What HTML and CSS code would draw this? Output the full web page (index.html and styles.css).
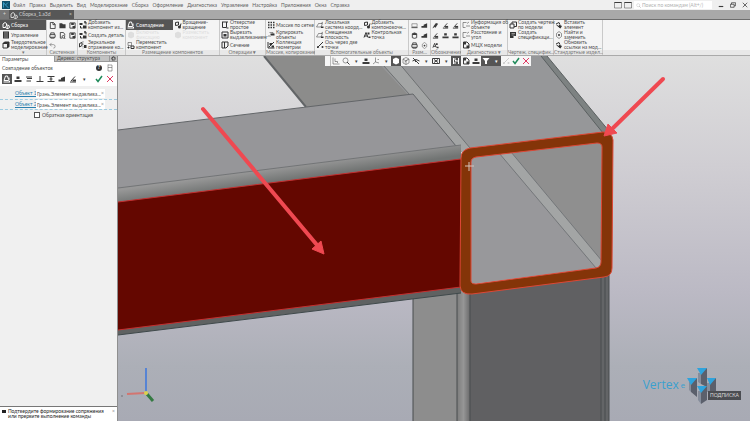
FILE: index.html
```html
<!DOCTYPE html>
<html lang="ru">
<head>
<meta charset="utf-8">
<meta name="viewport" content="width=device-width, initial-scale=1.0">
<title>Сборка_1.a3d</title>
<link rel="stylesheet" href="styles.css">
</head>
<body>
  <svg class="sprite" aria-hidden="true">
    <symbol id="asm" viewBox="0 0 16 16"><path d="M2 13V6l4-3 3 2v3M2 13h5M9 15l-2-3 3-4 4 1 1 4-3 2z" fill="none" stroke="currentColor" stroke-width="2"/><circle cx="11" cy="12" r="1.5" fill="currentColor"/></symbol>
    <symbol id="manage" viewBox="0 0 16 16"><path d="M2 1h12v14H2z" fill="currentColor"/><path d="M4 4h8M4 8h8M4 12h8" stroke="#f2f2f2" stroke-width="1"/></symbol>
    <symbol id="solid" viewBox="0 0 16 16"><path d="M2 5l3-3h9v9l-3 3" fill="currentColor" stroke="currentColor" stroke-width="2"/><path d="M2 5h9v9H2z" fill="#f2f2f2" stroke="currentColor" stroke-width="2"/></symbol>
    <symbol id="new" viewBox="0 0 16 16"><path d="M3 1h7l4 4v10H3zM9 1v5h5" fill="none" stroke="currentColor" stroke-width="2"/></symbol>
    <symbol id="open" viewBox="0 0 16 16"><path d="M1 3h6l2 2h6v9H1z" fill="currentColor"/></symbol>
    <symbol id="save" viewBox="0 0 16 16"><path d="M2 2h12v12H2z" fill="none" stroke="currentColor" stroke-width="2"/><path d="M5 2h6v5H5zM8 9h6v5H8z" fill="currentColor"/></symbol>
    <symbol id="print" viewBox="0 0 16 16"><path d="M4 6V2h8v4M2 6h12v6H2zM4 12v2h8v-2" fill="none" stroke="currentColor" stroke-width="2"/></symbol>
    <symbol id="preview" viewBox="0 0 16 16"><path d="M3 14V1h7l3 4v3M3 14h4M12 14l3 2" fill="none" stroke="currentColor" stroke-width="2"/><circle cx="10" cy="11" r="3" fill="none" stroke="currentColor" stroke-width="2"/></symbol>
    <symbol id="undo" viewBox="0 0 16 16"><path d="M6 2L2 6l4 4M2 6h8q4 0 4 4t-4 4" fill="none" stroke="currentColor" stroke-width="1"/></symbol>
    <symbol id="addpart" viewBox="0 0 16 16"><path d="M1 4h6v4H1zM8 9h7v6H8z" fill="currentColor"/><path d="M3 10v4h4M10 2h4v5M12 0v5" fill="none" stroke="currentColor" stroke-width="2"/></symbol>
    <symbol id="mirror" viewBox="0 0 16 16"><path d="M8 0v16" stroke="currentColor" stroke-width="1" stroke-dasharray="3 2"/><path d="M1 5l5-2v6l-5 3z" fill="none" stroke="currentColor" stroke-width="2"/><path d="M10 8h5v6h-5z" fill="currentColor"/></symbol>
    <symbol id="mate" viewBox="0 0 16 16"><path d="M2 11l3-9h4l2 7M2 11h9l3 3H1M12 5v6" fill="none" stroke="currentColor" stroke-width="2"/></symbol>
    <symbol id="rotate" viewBox="0 0 16 16"><path d="M3 3l6-1v6l-6 1zM8 12q6 0 6-7" fill="none" stroke="currentColor" stroke-width="2"/><circle cx="11" cy="12" r="3" fill="currentColor"/></symbol>
    <symbol id="move" viewBox="0 0 16 16"><path d="M2 3h7v6H2z" fill="none" stroke="currentColor" stroke-width="1"/><path d="M3 11v4M1 13h4M8 10h6v5H8z" fill="none" stroke="currentColor" stroke-width="2"/></symbol>
    <symbol id="hole" viewBox="0 0 16 16"><path d="M2 2h12M3 2v11h8V2M11 14h4" fill="none" stroke="currentColor" stroke-width="2"/></symbol>
    <symbol id="cut" viewBox="0 0 16 16"><path d="M2 2h12v12H2z" fill="none" stroke="currentColor" stroke-width="2"/><path d="M5 6h6v5H5z" fill="currentColor"/></symbol>
    <symbol id="section" viewBox="0 0 16 16"><path d="M2 2h5v12H2zM7 2h7v8l-4 4H7" fill="none" stroke="currentColor" stroke-width="2"/></symbol>
    <symbol id="grid" viewBox="0 0 16 16"><path d="M2 3h3M7 3h3M12 3h3M2 8h3M7 8h3M12 8h3M2 13h3M7 13h3M12 13h3" stroke="currentColor" stroke-width="3"/></symbol>
    <symbol id="copy" viewBox="0 0 16 16"><path d="M1 12l3-3 3 3M5 3h7v4" fill="none" stroke="currentColor" stroke-width="1"/><path d="M7 5h8v4H7z" fill="currentColor"/></symbol>
    <symbol id="coll" viewBox="0 0 16 16"><path d="M2 2v12h13M4 12L14 2" fill="none" stroke="currentColor" stroke-width="2"/><path d="M5 4h5v4H5zM9 9h5v4H9z" fill="currentColor"/></symbol>
    <symbol id="plane" viewBox="0 0 16 16"><path d="M1 12l4-7h8l-3 7zM10 5l4-3" fill="none" stroke="currentColor" stroke-width="1"/><path d="M10 11h5v3h-5z" fill="currentColor"/></symbol>
    <symbol id="axis" viewBox="0 0 16 16"><path d="M2 14L14 2" stroke="currentColor" stroke-width="2"/><circle cx="4" cy="12" r="2" fill="currentColor"/><circle cx="13" cy="12" r="2" fill="currentColor"/></symbol>
    <symbol id="point" viewBox="0 0 16 16"><path d="M2 13L6 3l4 10M3 10h6" fill="none" stroke="currentColor" stroke-width="2"/><path d="M9 3h4v4H9zM11 11h4v3h-4z" fill="currentColor"/></symbol>
    <symbol id="box" viewBox="0 0 16 16"><path d="M2 4h12v7H2z" fill="none" stroke="currentColor" stroke-width="1"/><path d="M1 12h14v2H1z" fill="currentColor"/></symbol>
    <symbol id="block" viewBox="0 0 16 16"><path d="M1 9h5V6l8-3v10H1z" fill="currentColor"/></symbol>
    <symbol id="cyl" viewBox="0 0 16 16"><path d="M3 4q5-4 10 0v9q-5 3-10 0z" fill="none" stroke="currentColor" stroke-width="2"/><path d="M3 4q5-4 10 0v3H3z" fill="currentColor"/></symbol>
    <symbol id="brush" viewBox="0 0 16 16"><path d="M3 10l6-8 5 2-6 9z" fill="currentColor"/><path d="M2 14l3-4" stroke="currentColor" stroke-width="2"/></symbol>
    <symbol id="mark" viewBox="0 0 16 16"><path d="M2 14h12M4 12l8-9" fill="none" stroke="currentColor" stroke-width="2"/><path d="M7 9h7v4H7z" fill="currentColor"/></symbol>
    <symbol id="info" viewBox="0 0 16 16"><path d="M2 3h7M2 3v10h5M10 5l4-3" fill="none" stroke="currentColor" stroke-width="1"/><path d="M9 9h2v2H9zM13 9h2v2h-2z" fill="currentColor"/></symbol>
    <symbol id="mass" viewBox="0 0 16 16"><path d="M3 2h7l4 4v8H3z" fill="none" stroke="currentColor" stroke-width="2"/><path d="M3 2h5v5H3zM9 9h5v5H9z" fill="currentColor"/></symbol>
    <symbol id="sheet" viewBox="0 0 16 16"><path d="M2 6h8v8H2zM6 6V2h9v9h-5" fill="none" stroke="currentColor" stroke-width="2"/></symbol>
    <symbol id="bom" viewBox="0 0 16 16"><path d="M2 2h12v8H9v4H2z" fill="currentColor"/><path d="M5 5h7M5 8h6" stroke="#f2f2f2" stroke-width="1"/></symbol>
    <symbol id="find" viewBox="0 0 16 16"><path d="M8 1l5 4v6l-5 4-5-4V5z" fill="none" stroke="currentColor" stroke-width="1"/><circle cx="8" cy="8" r="2" fill="currentColor"/></symbol>
    <symbol id="insert" viewBox="0 0 16 16"><path d="M2 6l6-3 2 4M3 8l7 5" fill="none" stroke="currentColor" stroke-width="2"/><path d="M8 7l6 3-3 5-4-3z" fill="currentColor"/></symbol>
    <symbol id="lens" viewBox="0 0 16 16"><circle cx="7" cy="7" r="5" fill="none" stroke="currentColor" stroke-width="1"/><path d="M10 10l5 5" stroke="currentColor" stroke-width="2"/></symbol>
    <symbol id="stack" viewBox="0 0 16 16"><path d="M1 10h14v4H1zM5 3h6v5H5z" fill="currentColor"/></symbol>
    <symbol id="axes" viewBox="0 0 16 16"><path d="M7 1v9l-5 4M7 10l7 2M11 5h3" fill="none" stroke="currentColor" stroke-width="1"/></symbol>
    <symbol id="cube" viewBox="0 0 16 16"><path d="M8 1l6 3v8l-6 3-6-3V4z" fill="currentColor"/></symbol>
    <symbol id="wire" viewBox="0 0 16 16"><path d="M8 1l6 3v8l-6 3-6-3V4zM2 4l6 4 6-4M8 8v7M5 10l6-5" fill="none" stroke="currentColor" stroke-width="1"/></symbol>
    <symbol id="hide" viewBox="0 0 16 16"><path d="M1 8q7-6 14 0M2 2l12 12M6 9h4" fill="none" stroke="currentColor" stroke-width="2"/></symbol>
    <symbol id="cross" viewBox="0 0 16 16"><path d="M1 3h14v10H1zM4 5l8 6M12 5l-8 6" fill="none" stroke="currentColor" stroke-width="2"/></symbol>
    <symbol id="snap" viewBox="0 0 16 16"><path d="M3 2v12M3 4h5M3 12h5M13 2v12M9 8h4" fill="none" stroke="currentColor" stroke-width="2"/><path d="M6 6h3v3H6z" fill="currentColor"/></symbol>
    <symbol id="frame" viewBox="0 0 16 16"><path d="M2 1v13h13M6 3v6h5v3" fill="none" stroke="currentColor" stroke-width="1"/></symbol>
    <symbol id="filter" viewBox="0 0 16 16"><path d="M1 2h14l-5 6v6H6V8z" fill="currentColor"/></symbol>
    <symbol id="check" viewBox="0 0 16 16"><path d="M2 8l4 5 8-11" fill="none" stroke="currentColor" stroke-width="3"/></symbol>
    <symbol id="x" viewBox="0 0 16 16"><path d="M2 2l12 12M14 2L2 14" fill="none" stroke="currentColor" stroke-width="2"/></symbol>
    <symbol id="perp" viewBox="0 0 16 16"><path d="M1 13h14M8 2v11" fill="none" stroke="currentColor" stroke-width="2"/></symbol>
    <symbol id="dist" viewBox="0 0 16 16"><path d="M1 3h14M1 13h14M8 3v10M5 8h6" fill="none" stroke="currentColor" stroke-width="2"/></symbol>
    <symbol id="par" viewBox="0 0 16 16"><path d="M2 4h12M4 7h10M3 12h9" fill="none" stroke="currentColor" stroke-width="2"/></symbol>
    <symbol id="gear" viewBox="0 0 16 16"><circle cx="8" cy="8" r="5" fill="none" stroke="currentColor" stroke-width="4" stroke-dasharray="3 1"/></symbol>
    <symbol id="tree" viewBox="0 0 16 16"><path d="M4 1v13h8M4 7h8M4 2h8v12" fill="none" stroke="currentColor" stroke-width="1"/></symbol>
    <symbol id="win" viewBox="0 0 16 16"><path d="M1 3h14v11H1z" fill="none" stroke="currentColor" stroke-width="1"/><path d="M1 2h14v2H1z" fill="currentColor"/></symbol>
    <symbol id="restore" viewBox="0 0 16 16"><path d="M1 6h10v8H1zM4 6V2h11v8h-4" fill="none" stroke="currentColor" stroke-width="2"/></symbol>
    <symbol id="min" viewBox="0 0 16 16"><path d="M2 12h12" stroke="currentColor" stroke-width="3"/></symbol>
  </svg>

  <div class="app">
    <header class="menubar">
      <svg class="logo" viewBox="0 0 16 16"><path d="M0 0h16v16H0z" fill="#12506c"/><path d="M3 13V3l4 5 5-5M7 8l6 6" fill="none" stroke="#3a9bc4" stroke-width="2"/></svg>
      <nav class="menu">
        <a href="#">Файл</a><a href="#">Правка</a><a href="#">Выделить</a><a href="#">Вид</a><a href="#">Моделирование</a><a href="#">Сборка</a><a href="#">Оформление</a><a href="#">Диагностика</a><a href="#">Управление</a><a href="#">Настройка</a><a href="#">Приложения</a><a href="#">Окна</a><a href="#">Справка</a>
      </nav>
      <button class="ico" aria-label="Окно"><svg><use href="#win"/></svg></button>
      <button class="ico" aria-label="Панель"><svg><use href="#win"/></svg></button>
      <label class="search"><svg><use href="#lens"/></svg><input type="text" aria-label="Поиск" placeholder="Поиск по командам (Alt+/)"></label>
      <div class="winbtns">
        <button class="ico" aria-label="Свернуть"><svg><use href="#min"/></svg></button>
        <button class="ico" aria-label="Восстановить"><svg><use href="#restore"/></svg></button>
        <button class="ico" aria-label="Закрыть"><svg><use href="#x"/></svg></button>
      </div>
    </header>

    <div class="doctabs">
      <button class="home">+</button>
      <button class="doctab"><svg><use href="#asm"/></svg><span>Сборка_1.a3d</span><span>×</span></button>
    </div>

    <div class="ribbon">
      <section class="group modes">
        <div class="cols"><div class="col">
          <button class="cmd on"><svg><use href="#asm"/></svg><span>Сборка</span></button>
          <button class="cmd"><svg><use href="#manage"/></svg><span>Управление</span></button>
          <button class="cmd"><svg><use href="#solid"/></svg><span>Твердотельное<br>моделирование</span></button>
        </div></div>
        <footer>▾</footer>
      </section>
      <section class="group system">
        <div class="icons three">
          <svg><use href="#new"/></svg><svg><use href="#open"/></svg><svg><use href="#save"/></svg>
          <svg><use href="#print"/></svg><svg><use href="#preview"/></svg><svg><use href="#save"/></svg>
          <svg><use href="#undo"/></svg>
        </div>
        <footer>Системная</footer>
      </section>
      <section class="group parts">
        <div class="cols"><div class="col">
          <button class="cmd"><svg><use href="#addpart"/></svg><span>Добавить<br>компонент из...</span></button>
          <button class="cmd"><svg><use href="#addpart"/></svg><span>Создать деталь</span></button>
          <button class="cmd"><svg><use href="#mirror"/></svg><span>Зеркальное<br>отражение ко...</span></button>
        </div></div>
        <footer>Компоненты</footer>
      </section>
      <section class="group place">
        <div class="cols">
          <div class="col">
            <button class="cmd on"><svg><use href="#mate"/></svg><span>Совпадение</span></button>
            <button class="cmd off" disabled><svg><use href="#cube"/></svg><span>Включить<br>фиксацию</span></button>
            <button class="cmd"><svg><use href="#move"/></svg><span>Переместить<br>компонент</span></button>
          </div>
          <div class="col">
            <button class="cmd"><svg><use href="#rotate"/></svg><span>Вращение-<br>вращение</span></button>
            <button class="cmd off" disabled><svg><use href="#cube"/></svg><span>Разместить<br>компонент</span></button>
          </div>
        </div>
        <footer>Размещение компонентов</footer>
      </section>
      <section class="group ops">
        <div class="cols"><div class="col">
          <button class="cmd"><svg><use href="#hole"/></svg><span>Отверстие<br>простое</span></button>
          <button class="cmd"><svg><use href="#cut"/></svg><span>Вырезать<br>выдавливанием</span></button>
          <button class="cmd"><svg><use href="#section"/></svg><span>Сечение</span></button>
        </div></div>
        <footer>Операции <b>▾</b></footer>
      </section>
      <section class="group array">
        <div class="cols"><div class="col">
          <button class="cmd"><svg><use href="#grid"/></svg><span>Массив по сетке</span></button>
          <button class="cmd"><svg><use href="#copy"/></svg><span>Копировать<br>объекты</span></button>
          <button class="cmd"><svg><use href="#coll"/></svg><span>Коллекция<br>геометрии</span></button>
        </div></div>
        <footer>Массив, копирование</footer>
      </section>
      <section class="group aux">
        <div class="cols">
          <div class="col">
            <button class="cmd"><svg><use href="#plane"/></svg><span>Локальная<br>система коорд...</span></button>
            <button class="cmd"><svg><use href="#plane"/></svg><span>Смещенная<br>плоскость</span></button>
            <button class="cmd"><svg><use href="#axis"/></svg><span>Ось через две<br>точки</span></button>
          </div>
          <div class="col">
            <button class="cmd"><svg><use href="#rotate"/></svg><span>Добавить<br>компоновочн...</span></button>
            <button class="cmd"><svg><use href="#point"/></svg><span>Контрольная<br>точка</span></button>
          </div>
        </div>
        <footer>Вспомогательные объекты</footer>
      </section>
      <section class="group dims">
        <div class="icons two">
          <svg><use href="#box"/></svg><svg><use href="#block"/></svg>
          <svg><use href="#cyl"/></svg><svg><use href="#block"/></svg>
          <svg><use href="#print"/></svg><svg><use href="#find"/></svg>
        </div>
        <footer>Разм...</footer>
      </section>
      <section class="group marks">
        <div class="icons three">
          <svg><use href="#brush"/></svg><svg><use href="#mark"/></svg><svg><use href="#mark"/></svg>
          <svg><use href="#mark"/></svg><svg><use href="#stack"/></svg><svg><use href="#stack"/></svg>
          <svg><use href="#point"/></svg>
        </div>
        <footer>Обозначения</footer>
      </section>
      <section class="group diag">
        <div class="cols"><div class="col">
          <button class="cmd"><svg><use href="#info"/></svg><span>Информация об<br>объекте</span></button>
          <button class="cmd"><svg><use href="#info"/></svg><span>Расстояние и<br>угол</span></button>
          <button class="cmd"><svg><use href="#mass"/></svg><span>МЦХ модели</span></button>
        </div></div>
        <footer>Диагностика <b>▾</b></footer>
      </section>
      <section class="group draw">
        <div class="cols"><div class="col">
          <button class="cmd"><svg><use href="#sheet"/></svg><span>Создать чертеж<br>по модели</span></button>
          <button class="cmd"><svg><use href="#bom"/></svg><span>Создать<br>спецификаци...</span></button>
        </div></div>
        <footer>Чертеж, специфик...</footer>
      </section>
      <section class="group std">
        <div class="cols"><div class="col">
          <button class="cmd"><svg><use href="#insert"/></svg><span>Вставить<br>элемент</span></button>
          <button class="cmd"><svg><use href="#find"/></svg><span>Найти и<br>заменить</span></button>
          <button class="cmd"><svg><use href="#insert"/></svg><span>Обновить<br>ссылки на мод...</span></button>
        </div></div>
        <footer>Стандартные издел...</footer>
      </section>
      <div class="rest"></div>
    </div>

    <div class="work">
      <aside class="side">
        <div class="sidetabs">
          <button class="current">Параметры</button>
          <button>Дерево: структура</button>
          <button class="ico" aria-label="Настройка"><svg><use href="#gear"/></svg></button>
        </div>
        <div class="sidehead">
          <div class="title"><span>Совпадение объектов</span><b class="help">?</b><svg><use href="#tree"/></svg></div>
          <div class="tools">
            <button class="ico on" aria-label="Совпадение"><svg><use href="#mate"/></svg></button>
            <button class="ico" aria-label="Соосность"><svg><use href="#stack"/></svg></button>
            <button class="ico" aria-label="Параллельность"><svg><use href="#par"/></svg></button>
            <button class="ico" aria-label="Перпендикулярность"><svg><use href="#perp"/></svg></button>
            <button class="ico" aria-label="Расстояние"><svg><use href="#dist"/></svg></button>
            <button class="ico" aria-label="Касание"><svg><use href="#block"/></svg></button>
            <button class="ico" aria-label="Угол"><svg><use href="#mark"/></svg></button>
            <button class="ico more" aria-label="Ещё">▾</button>
            <button class="ico ok" aria-label="Создать"><svg><use href="#check"/></svg></button>
            <button class="ico no" aria-label="Отмена"><svg><use href="#x"/></svg></button>
          </div>
        </div>
        <form class="params">
          <div class="row"><label for="obj1">Объект 1</label><div class="field"><input id="obj1" type="text" value="Грань.Элемент выдавлива..."><button type="button">×</button></div></div>
          <div class="row active"><label for="obj2">Объект 2</label><div class="field"><input id="obj2" type="text" value="Грань.Элемент выдавлива..."><button type="button">×</button></div></div>
          <label class="tick"><input type="checkbox">Обратная ориентация</label>
        </form>
        <div class="hint"><i class="flag"></i><span>Подтвердите формирование сопряжения или прервите выполнение команды</span><button>×</button></div>
      </aside>

      <main class="view">
        <svg class="scene" viewBox="118 56 632 365" preserveAspectRatio="xMinYMin slice">
          <defs>
            <linearGradient id="sky" x1="0" y1="0" x2="0" y2="1"><stop offset="0" stop-color="#dfdfdf"/><stop offset=".3" stop-color="#d0ced3"/><stop offset=".65" stop-color="#bbb9c4"/><stop offset=".85" stop-color="#acafb7"/><stop offset="1" stop-color="#a8aab4"/></linearGradient>
            <linearGradient id="bend" gradientUnits="userSpaceOnUse" x1="280" y1="167" x2="282" y2="181"><stop offset="0" stop-color="#989898"/><stop offset="1" stop-color="#717473"/></linearGradient>
            <linearGradient id="corner"><stop offset="0" stop-color="#7c7c7c"/><stop offset=".5" stop-color="#969696"/><stop offset="1" stop-color="#6a6a6b"/></linearGradient>
          </defs>
          <path d="M118 56h632v365H118z" fill="url(#sky)"/>
          <!-- rear tube -->
          <path d="M264 56l42 51 160 43V56z" fill="#8c8c8b"/>
          <path d="M264 56l42 51" stroke="#626567" stroke-width="2"/>
          <path d="M372 56h170l67 76-139 16-9 4z" fill="#969799"/>
          <path d="M375 56h18l77 92-9 4z" fill="#a3a5a5"/>
          <path d="M375 56l86 96M393 56l77 92" stroke="#6f7273" fill="none"/>
          <path d="M541 56h6l62 75-6 2z" fill="#7d8282"/>
          <path d="M541 56l62 77M547 56l62 75" stroke="#5b6061" fill="none"/>
          <!-- column -->
          <path d="M413 290h44v131h-44z" fill="#8d8d8d"/>
          <path d="M457 288h13v133h-13z" fill="url(#corner)"/>
          <path d="M470 290l131-16v147H470z" fill="#606062"/>
          <path d="M601 274h8v147h-8z" fill="#636567"/>
          <path d="M413 298v123M457 292v129M470 292v129M601 274v147M605 274v147M609 274v147" stroke="#484c4f" fill="none"/>
          <!-- horizontal beam -->
          <path d="M118 130l295-36 48 58v8l-343 43z" fill="#969699"/>
          <path d="M118 130l295-36 48 58" fill="none" stroke="#636669"/>
          <path d="M118 188l343-43v15l-343 43z" fill="url(#bend)"/>
          <path d="M118 188l343-43" stroke="#737577" fill="none"/>
          <path d="M118 328l343-43v8l-343 42z" fill="#5f6262"/>
          <path d="M118 335l343-42" stroke="#3f494b" fill="none"/>
          <path d="M118 202l343-43v128l-343 43z" fill="#640700"/>
          <path d="M118 202l343-43M118 330l343-43" stroke="#c52f2f" fill="none"/>
          <!-- tube end -->
          <path d="M471 157l131-15v125l-131 17z" fill="#98989b"/>
          <path d="M507 152l95-11v125z" fill="#8f8f8f"/>
          <path d="M499 153l12-1 91 109-5 8z" fill="#a3a5a5"/>
          <path d="M499 153l97 115M511 152l91 109" stroke="#74777a" fill="none"/>
          <path fill-rule="evenodd" d="M461 158q0-8 9-10l133-16q9 0 10 8l-1 128q0 8-8 9l-132 17q-11 1-12-8zM471 162q0-4 5-5l121-14q5 0 5 4l-1 115q0 5-5 6l-120 16q-5 0-5-3z" fill="#843408" stroke="#dc4736"/>
          <!-- pointer arrows -->
          <path d="M203 109L317 245" stroke="#ef4951" stroke-width="4" stroke-linecap="round"/>
          <path d="M324 254l-3-13-9 8z" fill="#ef4951" stroke="#ef4951"/>
          <path d="M663 79L611 130" stroke="#ef4951" stroke-width="4" stroke-linecap="round"/>
          <path d="M604 136l4-12 9 9z" fill="#ef4951" stroke="#ef4951"/>
          <path d="M469 162v9M465 166h9" stroke="#d6c5bd"/>
          <!-- coordinate axes -->
          <path d="M146 393v-25" stroke="#5784d4" stroke-width="2"/>
          <path d="M145 393l-18 1" stroke="#d37570" stroke-width="2"/>
          <path d="M147 394l6 7" stroke="#347a42" stroke-width="3"/>
          <circle cx="146" cy="393" r="2" fill="#ddd24b"/>
          <circle cx="122" cy="396" r="1" fill="#85868d"/>
        </svg>

        <div class="viewbar">
          <i class="grip"></i>
          <button class="ico" aria-label="Ориентация"><svg><use href="#frame"/></svg></button>
          <button class="ico" aria-label="Масштаб"><svg><use href="#lens"/></svg></button>
          <button class="ico" aria-label="Варианты масштаба">▾</button>
          <button class="ico" aria-label="Слои"><svg><use href="#stack"/></svg></button>
          <button class="ico" aria-label="Оси"><svg><use href="#axes"/></svg></button>
          <button class="ico" aria-label="Варианты осей">▾</button>
          <button class="ico on" aria-label="Полутоновое"><svg><use href="#cube"/></svg></button>
          <button class="ico" aria-label="Каркас"><svg><use href="#wire"/></svg></button>
          <button class="ico" aria-label="Скрыть"><svg><use href="#hide"/></svg></button>
          <button class="ico" aria-label="Варианты скрытия">▾</button>
          <button class="ico" aria-label="Сечение"><svg><use href="#cross"/></svg></button>
          <button class="ico" aria-label="Варианты сечения">▾</button>
          <button class="ico on" aria-label="Привязки"><svg><use href="#snap"/></svg></button>
          <button class="ico" aria-label="Свойства"><svg><use href="#mass"/></svg></button>
          <button class="ico" aria-label="Перестроить"><svg><use href="#stack"/></svg></button>
          <button class="ico on" aria-label="Фильтр"><svg><use href="#filter"/></svg></button>
          <button class="ico on" aria-label="Варианты фильтра">▾</button>
          <button class="ico pale" aria-label="Линия"><svg><use href="#axis"/></svg></button>
          <button class="ico ok" aria-label="Создать"><svg><use href="#check"/></svg></button>
          <button class="ico no" aria-label="Отмена"><svg><use href="#x"/></svg></button>
        </div>

        <div class="brand">
          <span>Vertex</span><small>e</small>
          <svg viewBox="0 0 30 38">
            <path d="M4 13l6-1v19l-6-5zM14 4l6-2v19l-6-3zM14 22l6-2v14l-6 4zM23 14l6-2v14h-6z" fill="#5b606c"/>
            <path d="M4 16v10l-2-2v-8zM14 7v11l-3-2V7zM14 25v13l-3-4v-9zM23 17v9h-3v-9z" fill="#858d9b"/>
            <path d="M0 12h10l-6 7zM10 2h10l-6 7zM10 20h10l-6 7zM20 12h9l-6 7z" fill="#2fa3dc"/>
          </svg>
          <em>ПОДПИСКА</em>
        </div>
      </main>
    </div>
  </div>
</body>
</html>
```
FILE: styles.css
```css
* {
  box-sizing: border-box;
}
body {
  margin: 0;
  font-family: Lato, Roboto, sans-serif;
  font-size: 5px;
  line-height: 5px;
  color: #4c4c4c;
  background: #f1f1f1;
}
button, input {
  font: inherit;
  color: inherit;
  background: none;
  border: 0;
  padding: 0;
  margin: 0;
  min-width: 0;
}
svg {
  display: block;
  flex: none;
  width: 8px;
  height: 8px;
}
.sprite {
  display: none;
}
.app {
  display: flex;
  flex-direction: column;
  height: 100vh;
}
.ico {
  display: flex;
  align-items: center;
  justify-content: center;
  flex: none;
  color: #3c3c3c;
}

/* menu */
.menubar {
  display: flex;
  align-items: center;
  gap: 2px;
  height: 10px;
  flex: none;
  padding: 0 2px;
  background: #efefef;
}
.menu {
  display: flex;
  flex: 1;
  gap: 4px;
  padding-left: 1px;
}
.menu a {
  color: #606060;
  text-decoration: none;
}
.search {
  display: flex;
  align-items: center;
  gap: 1px;
  width: 78px;
  height: 8px;
  padding-left: 2px;
  background: #fff;
  color: #a5a5a5;
}
.search svg {
  width: 5px;
  height: 5px;
}
.search input {
  flex: 1;
}
.search input::placeholder {
  color: #b0b0b0;
}
.winbtns {
  display: flex;
  gap: 6px;
  padding-left: 4px;
}
.winbtns svg {
  width: 6px;
  height: 6px;
}

/* document tabs */
.doctabs {
  display: flex;
  flex: none;
  height: 10px;
  background: #a9a9a9;
  border-bottom: 1px solid #6d6d6d;
}
.home {
  width: 9px;
  background: #767676;
  color: #d5d5d5;
}
.doctab {
  display: flex;
  align-items: center;
  gap: 1px;
  width: 65px;
  padding: 0 2px 0 1px;
  background: #575757;
  color: #d2d2d2;
  text-align: left;
}
.doctab span:nth-child(2) {
  flex: 1;
}

/* ribbon */
.ribbon {
  display: flex;
  flex: none;
  height: 36px;
  background: #f4f4f4;
  border-bottom: 1px solid #aaa;
}
.group {
  display: flex;
  flex-direction: column;
  flex: none;
  border-right: 1px solid #c9c9c9;
}
.group footer {
  height: 5px;
  background: #e8e8e8;
  color: #777;
  text-align: center;
  white-space: nowrap;
}
.modes { width: 47px; }
.system { width: 31px; }
.parts { width: 48px; }
.place { width: 94px; }
.ops { width: 46px; }
.array { width: 49px; }
.aux { width: 94px; }
.dims { width: 22px; }
.marks { width: 30px; }
.diag { width: 47px; }
.draw { width: 46px; }
.std { width: 49px; }
.cols {
  display: flex;
  flex: 1;
}
.col {
  flex: 1 1 0;
  min-width: 0;
}
.cmd {
  display: flex;
  align-items: center;
  gap: 1px;
  width: 100%;
  height: 10px;
  padding-left: 1px;
  text-align: left;
  white-space: nowrap;
}
.cmd svg {
  color: #333;
}
.modes .cmd {
  padding-left: 2px;
}
.on, .cmd.on svg {
  color: #fff;
}
.on {
  background: #555;
}
.off, .off svg {
  color: #dedede;
}
.icons {
  display: grid;
  grid-auto-rows: 10px;
  flex: 1;
  place-items: center;
  color: #3a3a3a;
}
.icons svg {
  width: 7px;
  height: 7px;
}
.three {
  grid-template-columns: repeat(3, 1fr);
}
.two {
  grid-template-columns: repeat(2, 1fr);
}
.rest {
  flex: 1;
  border-bottom: 5px solid #e8e8e8;
}

/* side panel */
.work {
  display: flex;
  flex: 1;
  min-height: 0;
}
.side {
  display: flex;
  flex-direction: column;
  flex: none;
  width: 118px;
  background: #f0f0f0;
  border-right: 1px solid #8f8f8f;
}
.sidetabs {
  display: flex;
  height: 6px;
  background: #b5b5b5;
}
.sidetabs button {
  flex: 1;
  padding-left: 2px;
  text-align: left;
  background: #c3c3c3;
  border: solid #999;
  border-width: 0 0 1px 1px;
}
.sidetabs .current {
  background: #fff;
  border: 0;
}
.sidetabs .ico {
  flex: none;
  width: 8px;
  padding: 0;
}
.sidetabs svg {
  width: 5px;
  height: 5px;
}
.sidehead {
  background: #fff;
  padding-bottom: 2px;
}
.title {
  display: flex;
  align-items: center;
  gap: 4px;
  height: 12px;
  padding: 0 3px 0 2px;
}
.title span {
  flex: 1;
}
.help {
  width: 6px;
  height: 6px;
  border-radius: 3px;
  background: #333;
  color: #fff;
  text-align: center;
}
.tools {
  display: flex;
  gap: 1px;
  padding: 0 2px;
}
.tools .ico {
  width: 10px;
  height: 10px;
}
.tools .on, .viewbar .on {
  color: #fff;
}
.tools .more {
  margin-right: auto;
}
.ico.ok {
  color: #1f8a5a;
}
.ico.no {
  color: #df3b64;
}
.params {
  flex: 1;
  padding-top: 2px;
}
.row {
  display: flex;
  align-items: center;
  gap: 2px;
  height: 11px;
  padding: 0 12px 0 15px;
  border: dashed transparent;
  border-width: 1px 0;
}
.active {
  border-color: #9ccbe0;
}
.row label {
  width: 19px;
  color: #2b7fae;
  text-decoration: underline;
  white-space: nowrap;
  flex: none;
}
.field {
  display: flex;
  align-items: center;
  flex: 1;
  min-width: 0;
  height: 9px;
  padding: 0 1px;
  background: #fff;
}
.field input {
  flex: 1;
}
.field button, .hint button {
  color: #888;
}
.tick {
  display: flex;
  align-items: center;
  gap: 2px;
  padding: 2px 0 0 34px;
}
.tick input {
  appearance: none;
  width: 6px;
  height: 6px;
  border: 1px solid #555;
  background: #fff;
}
.hint {
  display: flex;
  align-items: flex-start;
  gap: 2px;
  padding: 2px;
  background: #fff;
  border-top: 1px solid #777;
  color: #222;
}
.hint span {
  flex: 1;
}
.flag {
  width: 4px;
  height: 3px;
  margin-top: 1px;
  background: #222;
}

/* model view */
.view {
  position: relative;
  flex: 1;
  min-width: 0;
  overflow: hidden;
}
.scene {
  width: 100%;
  height: 100%;
}
.viewbar {
  position: absolute;
  top: 0;
  left: 207px;
  display: flex;
  align-items: center;
  height: 10px;
  background: #f6f6f6;
}
.grip {
  width: 6px;
  height: 10px;
  border-right: 1px solid #bbb;
}
.viewbar .ico {
  width: 10px;
  height: 10px;
}
.viewbar .pale {
  color: #ccc;
}
.brand {
  position: absolute;
  right: 9px;
  bottom: 17px;
  display: flex;
  align-items: center;
  gap: 2px;
  color: #3aa0cf;
}
.brand span {
  font: 12px/16px "Open Sans", sans-serif;
}
.brand small {
  font-size: 8px;
}
.brand svg {
  width: 30px;
  height: 38px;
  margin-right: 24px;
}
.brand em {
  position: absolute;
  right: 0;
  bottom: 4px;
  padding: 2px;
  background: #4b4d52;
  color: #ddd;
  font-style: normal;
}
```
